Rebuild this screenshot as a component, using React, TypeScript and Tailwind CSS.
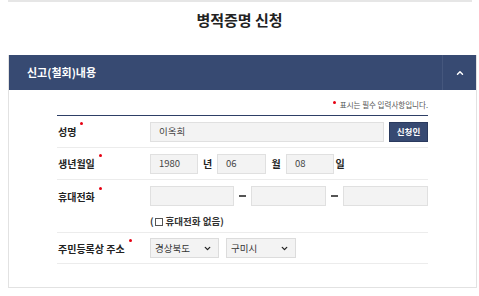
import { ChevronUp, ChevronDown } from "lucide-react";

const font = { fontFamily: '"Noto Sans CJK KR", "Noto Sans", sans-serif' };

function Req() {
    return <span className="inline-block w-[3px] h-[3px] rounded-full bg-[#e60012] ml-[4px] -translate-y-[8px]" />;
}

function Label({ text }: { text: string }) {
    return (
        <div className="w-[93px] shrink-0 pl-px text-[10px] font-bold text-[#222] flex items-center">
            {text}
            <Req />
        </div>
    );
}

function Box({ value, w }: { value?: string; w: string }) {
    return (
        <div className={`${w} h-[20px] bg-[#f3f3f3] border border-[#e0e0e0] px-[8px] flex items-center text-[9.5px] text-[#444]`}>
            {value}
        </div>
    );
}

function Select({ value, w }: { value: string; w: string }) {
    return (
        <div className={`${w} h-[20px] bg-[#f3f3f3] border border-[#dcdcdc] pl-[4px] pr-[6px] flex items-center justify-between text-[9.5px] text-[#333]`}>
            <span>{value}</span>
            <ChevronDown size={9} strokeWidth={3.5} className="text-[#222]" />
        </div>
    );
}

export default function App() {
    return (
        <div className="w-[479px] h-[296px] bg-white overflow-hidden" style={font}>
            <div className="mx-[8px] mr-[7px] h-[2px] bg-[#e6e6e6]" />
            <h1 className="text-center text-[15px] font-bold text-[#222] leading-[20px] mt-[8px]">병적증명 신청</h1>

            <div className="ml-[8px] mr-[2px] mt-[25px] h-[233px] border border-[#e2e2e2] border-t-0">
                <div className="h-[35px] bg-[#374a72] flex items-center justify-between">
                    <span className="pl-[18px] text-[11px] font-bold text-white">신고(철회)내용</span>
                    <div className="h-full w-[34px] border-l border-[#45577d] flex items-center justify-center">
                        <ChevronUp size={10} strokeWidth={3.5} className="text-white" />
                    </div>
                </div>

                <div className="pl-[48px] pr-[48px]">
                    <div className="flex justify-end items-center pt-[6px] h-[24px] text-[7.5px] text-[#555]">
                        <span className="inline-block w-[3px] h-[3px] rounded-full bg-[#e60012] mr-[4px] -translate-y-[3px]" />
                        표시는 필수 입력사항입니다.
                    </div>

                    <div className="mt-[1px] border-t-[1.5px] border-[#2e3f66]">
                        <div className="flex items-center h-[32px] border-b border-[#ececec]">
                            <Label text="성명" />
                            <Box value="이옥희" w="w-[234px]" />
                            <div className="ml-[5px] w-[39px] h-[20px] bg-[#374a72] border border-[#2a3a5e] flex items-center justify-center text-[8.5px] font-bold text-white">
                                신청인
                            </div>
                        </div>

                        <div className="flex items-center h-[32px] border-b border-[#ececec]">
                            <Label text="생년월일" />
                            <Box value="1980" w="w-[48px]" />
                            <span className="w-[19px] text-center text-[10px] font-bold text-[#222]">년</span>
                            <Box value="06" w="w-[49px]" />
                            <span className="w-[20px] text-center text-[10px] font-bold text-[#222]">월</span>
                            <Box value="08" w="w-[48px]" />
                            <span className="w-[12px] text-center text-[10px] font-bold text-[#222]">일</span>
                        </div>

                        <div className="h-[53px] border-b border-[#ececec] pt-[6px]">
                            <div className="flex items-center h-[20px]">
                                <Label text="휴대전화" />
                                <Box w="w-[84px]" />
                                <span className="w-[17px] flex justify-center">
                                    <span className="w-[7px] h-[2px] bg-[#555]" />
                                </span>
                                <Box w="w-[76px]" />
                                <span className="w-[17px] flex justify-center">
                                    <span className="w-[7px] h-[2px] bg-[#555]" />
                                </span>
                                <Box w="w-[85px]" />
                            </div>
                            <div className="flex items-center pl-[93px] mt-[8px] text-[9.5px] font-bold text-[#333]">
                                <span>(</span>
                                <span className="inline-block w-[8px] h-[8px] border border-[#555] bg-white ml-px mr-[3px] mt-[2px]" />
                                <span>휴대전화 없음)</span>
                            </div>
                        </div>

                        <div className="flex items-center h-[31px] border-b border-[#ececec]">
                            <Label text="주민등록상 주소" />
                            <Select value="경상북도" w="w-[69px]" />
                            <div className="w-[7px]" />
                            <Select value="구미시" w="w-[70px]" />
                        </div>
                    </div>
                </div>
            </div>
        </div>
    );
}
